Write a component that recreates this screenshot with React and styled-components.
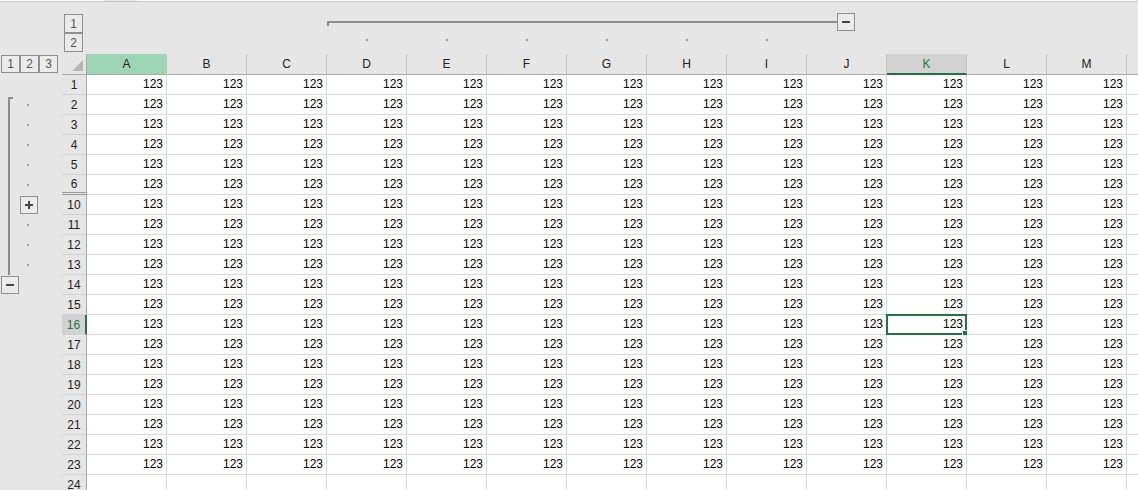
import React from "react";
import styled, { createGlobalStyle, css } from "styled-components";

const GlobalStyle = createGlobalStyle`
  html, body { margin: 0; padding: 0; }
  body { background: #e6e6e6; font-family: "Liberation Sans", Arial, sans-serif; }
  * { box-sizing: border-box; }
`;

const COLS = "62px 25px repeat(14, 80px)";
const LETTERS = "ABCDEFGHIJKLMN".split("");
const ROWS = [1, 2, 3, 4, 5, 6, 10, 11, 12, 13, 14, 15, 16, 17, 18, 19, 20, 21, 22, 23, 24];
const GREEN = "#217346";

// outline marks per row: [level 2 slot, level 3 slot]
const OUTLINE = {
  2: ["start", "dot"],
  3: ["line", "dot"],
  4: ["line", "dot"],
  5: ["line", "dot"],
  6: ["line", "dot"],
  10: ["line", "plus"],
  11: ["line", "dot"],
  12: ["line", "dot"],
  13: ["line", "dot"],
  14: ["minus", null],
};

const Page = styled.div`
  width: 1138px;
  height: 490px;
  overflow: hidden;
  background: #e6e6e6;
  display: flex;
  flex-direction: column;
`;

const TopStrip = styled.div`
  height: 2px;
  flex-shrink: 0;
  display: flex;
  border-bottom: 1px solid #c6c6c6;
`;

const StripPiece = styled.div`
  width: ${(p) => p.$w};
  flex: ${(p) => (p.$grow ? 1 : "none")};
  background: ${(p) => (p.$white ? "#ffffff" : "transparent")};
  border-right: ${(p) => (p.$white ? "1px solid #c6c6c6" : "none")};
`;

const TopOutline = styled.div`
  display: grid;
  grid-template-columns: ${COLS};
  grid-template-rows: 29px 23px;
  flex-shrink: 0;
`;

const LevelStack = styled.div`
  grid-column: 2;
  grid-row: 1 / 3;
  padding: 12px 0 0 2px;
  display: flex;
  flex-direction: column;
`;

const LevelRow = styled.div`
  display: flex;
  padding: 1px 0 0 1px;
  background: #e6e6e6;
`;

const LevelButton = styled.div`
  width: 19px;
  height: ${(p) => (p.$short ? "18px" : "19px")};
  border: 1px solid #8f8f8f;
  background: #ebebeb;
  color: #555;
  font-size: 12px;
  display: flex;
  align-items: center;
  justify-content: center;
`;

const Bracket = styled.div`
  grid-column: 6 / 13;
  grid-row: 1;
  display: flex;
  align-items: flex-start;
  padding: 11px 32px 0 0;
`;

const BracketLine = styled.div`
  flex: 1;
  height: 2px;
  margin-top: 8px;
  background: #8c8c8c;
  position: relative;
  &::before {
    content: "";
    position: absolute;
    left: 0;
    top: 0;
    width: 2px;
    height: 5px;
    background: #8c8c8c;
  }
`;

const OutlineBtn = styled.div`
  width: 18px;
  height: 18px;
  border: 1px solid #8f8f8f;
  background: #ebebeb;
  display: flex;
  align-items: center;
  justify-content: center;
  flex-shrink: 0;
  margin: ${(p) => p.$m || "0"};
`;

const TopDotCell = styled.div`
  grid-row: 2;
  grid-column: ${(p) => p.$col};
  display: flex;
  justify-content: center;
  padding-top: 8px;
`;

const Dot = styled.div`
  width: 2px;
  height: 2px;
  background: #9a9a9a;
`;

const Sheet = styled.div`
  display: grid;
  grid-template-columns: ${COLS};
  grid-template-rows: 21px;
  grid-auto-rows: 20px;
`;

const OutlineCell = styled.div`
  display: flex;
  background: #e6e6e6;
`;

const Slot = styled.div`
  width: 20px;
  position: relative;
  display: flex;
  align-items: flex-start;
  ${(p) =>
    (p.$kind === "line" || p.$kind === "start") &&
    css`
      &::before {
        content: "";
        position: absolute;
        left: 8px;
        width: 2px;
        top: ${p.$kind === "start" ? "2px" : "0"};
        bottom: 0;
        background: #8c8c8c;
      }
    `}
  ${(p) =>
    p.$kind === "start" &&
    css`
      &::after {
        content: "";
        position: absolute;
        left: 8px;
        top: 2px;
        width: 5px;
        height: 2px;
        background: #8c8c8c;
      }
    `}
  ${(p) =>
    p.$kind === "dot" &&
    css`
      align-items: center;
      padding-left: 7px;
    `}
`;

const Corner = styled.div`
  background: #e6e6e6;
  border-right: 1px solid #a9a9a9;
  border-bottom: 1px solid #a9a9a9;
  display: flex;
  align-items: flex-end;
  justify-content: flex-end;
  padding: 0 3px 3px 0;
`;

const ColHeader = styled.div`
  background: ${(p) => (p.$variant === "hl" ? "#9fd5b7" : p.$variant === "sel" ? "#d2d2d2" : "#e6e6e6")};
  color: ${(p) => (p.$variant === "sel" ? GREEN : "#222")};
  border-right: 1px solid #c3c3c3;
  border-bottom: ${(p) => (p.$variant === "sel" ? `2px solid ${GREEN}` : "1px solid #a9a9a9")};
  font-size: 12px;
  display: flex;
  align-items: center;
  justify-content: center;
  padding-top: ${(p) => (p.$variant === "sel" ? "1px" : "0")};
`;

const RowHeader = styled.div`
  background: ${(p) => (p.$sel ? "#d2d2d2" : "#e6e6e6")};
  color: ${(p) => (p.$sel ? GREEN : "#222")};
  border-right: ${(p) => (p.$sel ? `2px solid ${GREEN}` : "1px solid #a9a9a9")};
  border-bottom: ${(p) => (p.$gap ? "3px double #9a9a9a" : "1px solid #d2d2d2")};
  font-size: 12px;
  display: flex;
  align-items: center;
  justify-content: center;
  padding-top: 1px;
`;

const Cell = styled.div`
  position: relative;
  background: #ffffff;
  border-right: 1px solid #d9d9d9;
  border-bottom: 1px solid #d9d9d9;
  font-size: 12px;
  color: #000;
  display: flex;
  align-items: flex-end;
  justify-content: flex-end;
  padding: 0 3px 3px 0;
`;

const Selection = styled.div`
  position: absolute;
  left: -1px;
  top: -1px;
  right: -1px;
  bottom: -1px;
  border: 2px solid ${GREEN};
  &::after {
    content: "";
    position: absolute;
    right: -5px;
    bottom: -5px;
    width: 6px;
    height: 6px;
    background: ${GREEN};
    border: 1px solid #fff;
  }
`;

const Minus = () => (
  <svg width="10" height="10" viewBox="0 0 10 10">
    <rect x="1" y="4" width="8" height="2" fill="#444" />
  </svg>
);

const Plus = () => (
  <svg width="10" height="10" viewBox="0 0 10 10">
    <rect x="1" y="4" width="8" height="2" fill="#444" />
    <rect x="4" y="1" width="2" height="8" fill="#444" />
  </svg>
);

const OutlineSlot = ({ kind }) => {
  if (kind === "minus")
    return (
      <Slot>
        <OutlineBtn $m="1px 0 0 1px">
          <Minus />
        </OutlineBtn>
      </Slot>
    );
  if (kind === "plus")
    return (
      <Slot>
        <OutlineBtn $m="1px 0 0 0">
          <Plus />
        </OutlineBtn>
      </Slot>
    );
  return <Slot $kind={kind}>{kind === "dot" && <Dot />}</Slot>;
};

export default function App() {
  return (
    <>
      <GlobalStyle />
      <Page>
        <TopStrip>
          <StripPiece $w="106px" $white />
          <StripPiece $w="31px" />
          <StripPiece $grow $white />
        </TopStrip>

        <TopOutline>
          <LevelStack>
            <LevelButton>1</LevelButton>
            <LevelButton>2</LevelButton>
          </LevelStack>
          <Bracket>
            <BracketLine />
            <OutlineBtn>
              <Minus />
            </OutlineBtn>
          </Bracket>
          {[6, 7, 8, 9, 10, 11].map((c) => (
            <TopDotCell key={c} $col={c}>
              <Dot />
            </TopDotCell>
          ))}
        </TopOutline>

        <Sheet>
          <LevelRow>
            <LevelButton $short>1</LevelButton>
            <LevelButton $short>2</LevelButton>
            <LevelButton $short>3</LevelButton>
          </LevelRow>
          <Corner>
            <svg width="11" height="11" viewBox="0 0 11 11">
              <polygon points="11,0 11,11 0,11" fill="#b5b5b5" />
            </svg>
          </Corner>
          {LETTERS.map((l) => (
            <ColHeader key={l} $variant={l === "A" ? "hl" : l === "K" ? "sel" : undefined}>
              {l === "N" ? "" : l}
            </ColHeader>
          ))}

          {ROWS.map((r) => {
            const [l2, l3] = OUTLINE[r] || [null, null];
            return (
              <React.Fragment key={r}>
                <OutlineCell>
                  <OutlineSlot kind={l2} />
                  <OutlineSlot kind={l3} />
                </OutlineCell>
                <RowHeader $sel={r === 16} $gap={r === 6}>
                  {r}
                </RowHeader>
                {LETTERS.map((l) => (
                  <Cell key={l}>
                    {r <= 23 && l !== "N" ? "123" : ""}
                    {r === 16 && l === "K" && <Selection />}
                  </Cell>
                ))}
              </React.Fragment>
            );
          })}
        </Sheet>
      </Page>
    </>
  );
}
